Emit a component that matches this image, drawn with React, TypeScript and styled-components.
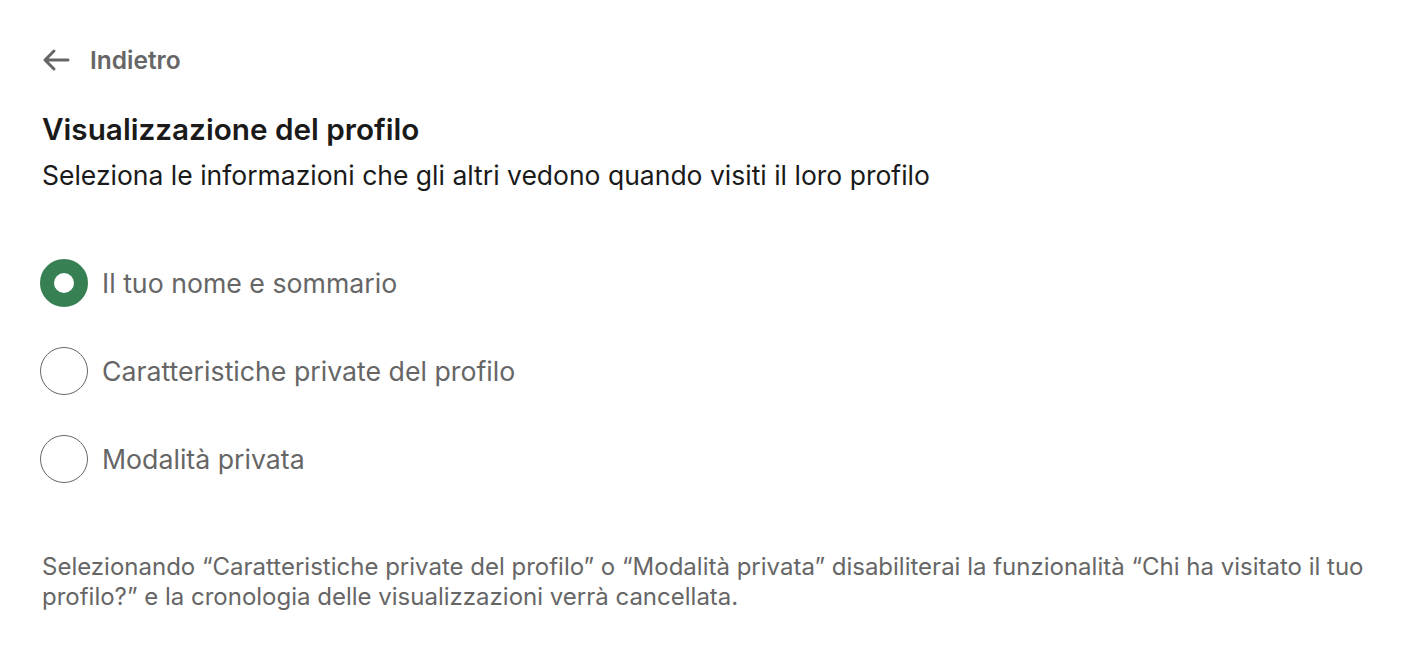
import React, { useState } from "react";
import styled, { createGlobalStyle } from "styled-components";

const Global = createGlobalStyle`
  html, body { margin: 0; padding: 0; background: #fff; }
  body { font-family: Inter, "Noto Sans", "Liberation Sans", sans-serif; -webkit-font-smoothing: antialiased; }
`;

const Page = styled.div`
  padding: 44px 42px 0 42px;
  display: flex;
  flex-direction: column;
`;

const BackLink = styled.a`
  display: flex;
  align-items: center;
  gap: 20px;
  color: #666;
  font-size: 24.5px;
  line-height: 32px;
  font-weight: 600;
  text-decoration: none;
  height: 32px;
  cursor: pointer;
`;

const Title = styled.h1`
  margin: 36px 0 0 0;
  font-size: 29.7px;
  line-height: 34px;
  font-weight: 600;
  color: #1a1a1a;
`;

const Subtitle = styled.p`
  margin: 12px 0 0 0;
  font-size: 26.5px;
  line-height: 34px;
  color: #1a1a1a;
`;

const Options = styled.div`
  margin-top: 67px;
  display: flex;
  flex-direction: column;
  gap: 40px;
`;

const Option = styled.label`
  display: flex;
  align-items: center;
  gap: 14px;
  cursor: pointer;
  margin-left: -2px;
`;

const Radio = styled.span<{ $checked: boolean }>`
  box-sizing: border-box;
  width: 48px;
  height: 48px;
  border-radius: 50%;
  flex: none;
  border: ${(p) => (p.$checked ? "14px solid #378053" : "1.5px solid #666")};
  background: #fff;
`;

const OptionText = styled.span`
  font-size: 26.7px;
  line-height: 34px;
  color: #666;
`;

const Note = styled.p`
  margin: 69px 0 0 0;
  font-size: 24px;
  line-height: 30px;
  color: #666;
`;

const options = [
  "Il tuo nome e sommario",
  "Caratteristiche private del profilo",
  "Modalità privata",
];

export default function App() {
  const [sel, setSel] = useState(0);
  return (
    <>
      <Global />
      <Page>
        <BackLink>
          <svg width="28" height="24" viewBox="0 0 28 24" fill="none">
            <path d="M26 12H3M12 3L3 12L12 21" stroke="#666" strokeWidth="3" strokeLinecap="round" strokeLinejoin="round" />
          </svg>
          Indietro
        </BackLink>
        <Title>Visualizzazione del profilo</Title>
        <Subtitle>Seleziona le informazioni che gli altri vedono quando visiti il loro profilo</Subtitle>
        <Options>
          {options.map((o, i) => (
            <Option key={o} onClick={() => setSel(i)}>
              <Radio $checked={sel === i} />
              <OptionText>{o}</OptionText>
            </Option>
          ))}
        </Options>
        <Note>
          Selezionando “Caratteristiche private del profilo” o “Modalità privata” disabiliterai la funzionalità “Chi ha visitato il tuo profilo?” e la cronologia delle visualizzazioni verrà cancellata.
        </Note>
      </Page>
    </>
  );
}
